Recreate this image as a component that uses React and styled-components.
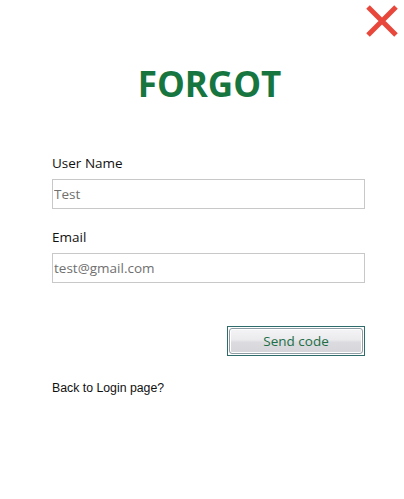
import styled, { createGlobalStyle } from "styled-components";

const GlobalStyle = createGlobalStyle`
  html, body {
    margin: 0;
    padding: 0;
    background: #ffffff;
  }
`;

const Page = styled.div`
  width: 404px;
  height: 499px;
  box-sizing: border-box;
  display: flex;
  flex-direction: column;
  padding: 0 39px 0 52px;
  font-family: "Open Sans", "Noto Sans", sans-serif;
  background: #fff;
`;

const TopBar = styled.div`
  display: flex;
  justify-content: flex-end;
  margin-right: -34px;
  padding-top: 5px;
  height: 32px;
`;

const CloseButton = styled.button`
  width: 34px;
  height: 32px;
  padding: 0;
  border: none;
  background: none;
  cursor: pointer;
  display: flex;
  align-items: center;
  justify-content: center;
`;

const Title = styled.h1`
  margin: 25px 0 0;
  text-align: center;
  font-size: 35px;
  font-weight: 700;
  color: #17763f;
  line-height: 44px;
  padding-left: 2px;
`;

const Form = styled.form`
  display: flex;
  flex-direction: column;
  margin-top: 48px;
`;

const Field = styled.div`
  display: flex;
  flex-direction: column;
  margin-bottom: ${(p) => p.$gap || 0}px;
`;

const Label = styled.label`
  font-size: 13.5px;
  color: #111;
  line-height: 19px;
  margin-bottom: 6px;
`;

const Input = styled.input`
  box-sizing: border-box;
  width: 313px;
  height: 30px;
  border: 1px solid #c8c8c8;
  padding: 0 0 0 1px;
  font-family: "Open Sans", "Noto Sans", sans-serif;
  font-size: 13.5px;
  color: #707070;
  outline: none;
  &::placeholder {
    color: #707070;
  }
`;

const Actions = styled.div`
  display: flex;
  justify-content: flex-end;
  width: 313px;
  margin-top: 43px;
`;

const SendButton = styled.button`
  box-sizing: border-box;
  width: 138px;
  height: 30px;
  padding: 1px;
  border: 1px solid #2e6b6b;
  background: #fff;
  cursor: pointer;
  display: flex;
`;

const ButtonFace = styled.span`
  flex: 1;
  display: flex;
  align-items: center;
  justify-content: center;
  border: 1px solid #8e9ca4;
  border-radius: 3px;
  box-shadow: inset 0 0 0 1px #ffffff;
  background: linear-gradient(#f4f4f6 0%, #ebebee 45%, #dcdce0 55%, #d6d6da 100%);
  font-family: "Open Sans", "Noto Sans", sans-serif;
  font-size: 13.5px;
  color: #1e6e46;
`;

const BackLink = styled.a`
  margin-top: 25px;
  font-family: "Liberation Sans", Arial, sans-serif;
  font-size: 12.3px;
  color: #111;
  text-decoration: none;
  cursor: pointer;
`;

const CrossIcon = () => (
  <svg width="34" height="32" viewBox="0 0 34 32">
    <path d="M3 2 L31 30 M31 2 L3 30" stroke="#e8473b" strokeWidth="5" strokeLinecap="butt" />
  </svg>
);

const App = () => {
  return (
    <Page>
      <GlobalStyle />
      <TopBar>
        <CloseButton type="button" aria-label="Close">
          <CrossIcon />
        </CloseButton>
      </TopBar>
      <Title>FORGOT</Title>
      <Form onSubmit={(e) => e.preventDefault()}>
        <Field $gap={19}>
          <Label>User Name</Label>
          <Input defaultValue="Test" />
        </Field>
        <Field>
          <Label>Email</Label>
          <Input defaultValue="test@gmail.com" />
        </Field>
        <Actions>
          <SendButton type="submit">
            <ButtonFace>Send code</ButtonFace>
          </SendButton>
        </Actions>
      </Form>
      <BackLink>Back to Login page?</BackLink>
    </Page>
  );
};

export default App;
